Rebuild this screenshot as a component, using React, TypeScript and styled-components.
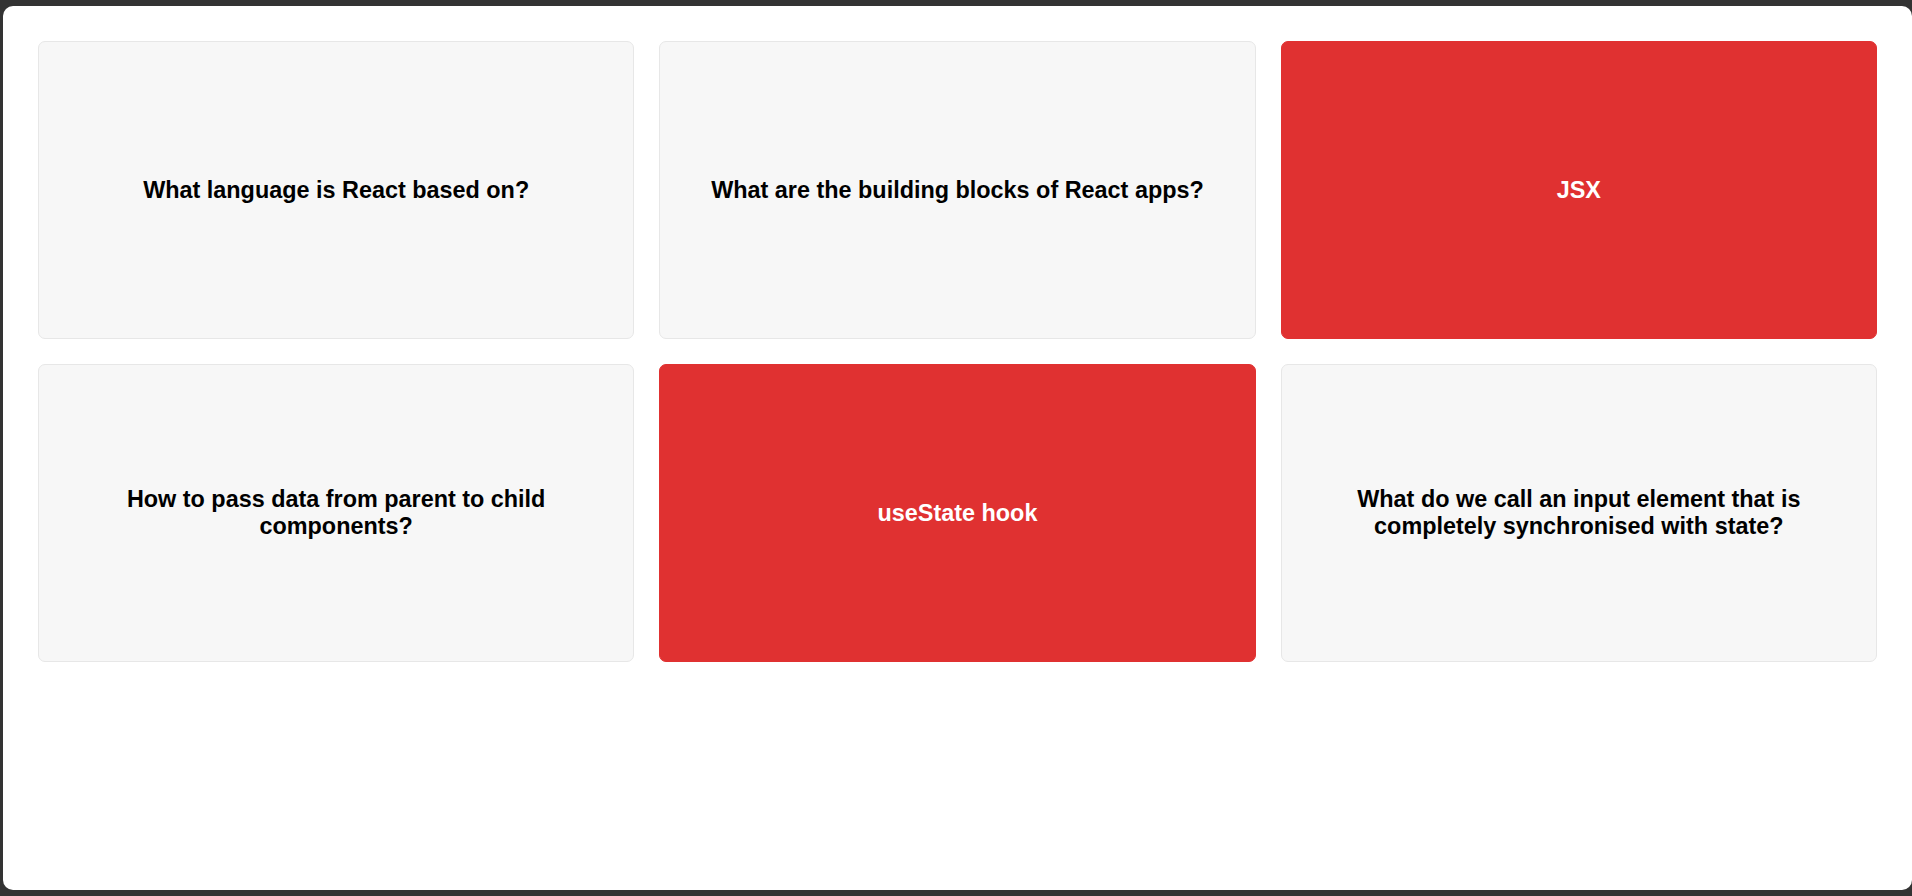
import React, { useState } from "react";
import styled, { createGlobalStyle } from "styled-components";

const GlobalStyle = createGlobalStyle`
  * {
    box-sizing: border-box;
  }

  body {
    margin: 0;
    background-color: #333;
    font-family: "Liberation Sans", Arial, sans-serif;
  }
`;

const Window = styled.div`
  margin: 6px 0 6px 3px;
  height: 884px;
  background-color: #fff;
  border-radius: 10px;
  padding: 35px;
`;

const Flashcards = styled.div`
  display: grid;
  grid-template-columns: repeat(3, 1fr);
  gap: 25px;
`;

const Card = styled.div<{ $selected: boolean }>`
  display: flex;
  align-items: center;
  justify-content: center;
  aspect-ratio: 2 / 1;
  padding: 0 48px;
  border-radius: 7px;
  border: 1px solid ${(p) => (p.$selected ? "#e03131" : "#e7e7e7")};
  background-color: ${(p) => (p.$selected ? "#e03131" : "#f7f7f7")};
  color: ${(p) => (p.$selected ? "#fff" : "#000")};
  font-size: 23.4px;
  font-weight: 700;
  line-height: 27px;
  text-align: center;
  cursor: pointer;

  p {
    margin: 0;
  }
`;

const questions = [
  {
    id: 3457,
    question: "What language is React based on?",
    answer: "JavaScript",
  },
  {
    id: 7336,
    question: "What are the building blocks of React apps?",
    answer: "Components",
  },
  {
    id: 8832,
    question: "What's the name of the syntax we use to describe a UI in React?",
    answer: "JSX",
  },
  {
    id: 1297,
    question: "How to pass data from parent to child components?",
    answer: "Props",
  },
  {
    id: 9103,
    question: "How to give components memory?",
    answer: "useState hook",
  },
  {
    id: 2002,
    question:
      "What do we call an input element that is completely synchronised with state?",
    answer: "Controlled element",
  },
];

export default function App() {
  const [selected, setSelected] = useState<number[]>([8832, 9103]);

  function handleClick(id: number) {
    setSelected((s) => (s.includes(id) ? s.filter((x) => x !== id) : [...s, id]));
  }

  return (
    <>
      <GlobalStyle />
      <Window>
        <Flashcards>
          {questions.map((q) => {
            const isSelected = selected.includes(q.id);
            return (
              <Card
                key={q.id}
                $selected={isSelected}
                onClick={() => handleClick(q.id)}
              >
                <p>{isSelected ? q.answer : q.question}</p>
              </Card>
            );
          })}
        </Flashcards>
      </Window>
    </>
  );
}
